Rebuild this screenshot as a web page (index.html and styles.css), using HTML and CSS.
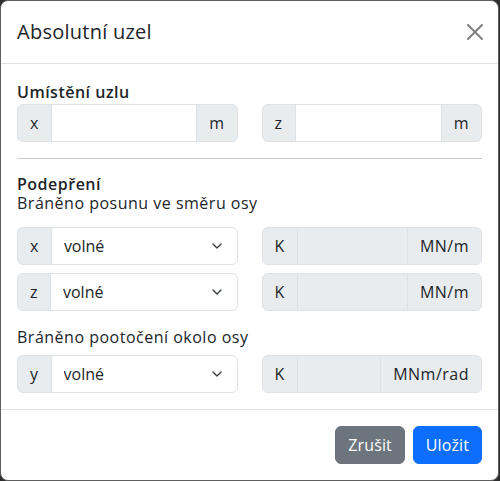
FILE: index.html
```html
<!DOCTYPE html>
<html lang="cs">
<head>
<meta charset="utf-8">
<title>Absolutní uzel</title>
<link rel="stylesheet" href="styles.css">
</head>
<body>
<div class="modal">
  <div class="modal-header">
    <h5 class="modal-title">Absolutní uzel</h5>
    <button class="btn-close" type="button" aria-label="Close">
      <svg viewBox="0 0 16 16" width="16" height="16"><path d="M.293.293a1 1 0 0 1 1.414 0L8 6.586 14.293.293a1 1 0 1 1 1.414 1.414L9.414 8l6.293 6.293a1 1 0 0 1-1.414 1.414L8 9.414l-6.293 6.293a1 1 0 0 1-1.414-1.414L6.586 8 .293 1.707a1 1 0 0 1 0-1.414z"/></svg>
    </button>
  </div>
  <div class="modal-body">
    <div class="label-bold">Umístění uzlu</div>
    <div class="grid-row">
      <div class="input-group">
        <span class="addon">x</span>
        <input class="form-control" type="text">
        <span class="addon">m</span>
      </div>
      <div class="input-group">
        <span class="addon">z</span>
        <input class="form-control" type="text">
        <span class="addon">m</span>
      </div>
    </div>
    <hr class="divider">
    <div class="support-head">
      <div class="label-bold">Podepření</div>
      <div>Bráněno posunu ve směru osy</div>
    </div>
    <div class="grid-row first-row">
      <div class="input-group">
        <span class="addon">x</span>
        <div class="select-wrap">
          <select class="form-select"><option>volné</option></select>
          <svg class="chevron" viewBox="0 0 10 6" width="10" height="6"><path d="M1 1l4 4 4-4" fill="none" stroke="#343a40" stroke-width="1.3" stroke-linecap="round" stroke-linejoin="round"/></svg>
        </div>
      </div>
      <div class="input-group">
        <span class="addon">K</span>
        <input class="form-control" type="text" disabled>
        <span class="addon">MN/m</span>
      </div>
    </div>
    <div class="grid-row next-row">
      <div class="input-group">
        <span class="addon">z</span>
        <div class="select-wrap">
          <select class="form-select"><option>volné</option></select>
          <svg class="chevron" viewBox="0 0 10 6" width="10" height="6"><path d="M1 1l4 4 4-4" fill="none" stroke="#343a40" stroke-width="1.3" stroke-linecap="round" stroke-linejoin="round"/></svg>
        </div>
      </div>
      <div class="input-group">
        <span class="addon">K</span>
        <input class="form-control" type="text" disabled>
        <span class="addon">MN/m</span>
      </div>
    </div>
    <div class="sub-label">Bráněno pootočení okolo osy</div>
    <div class="grid-row">
      <div class="input-group">
        <span class="addon">y</span>
        <div class="select-wrap">
          <select class="form-select"><option>volné</option></select>
          <svg class="chevron" viewBox="0 0 10 6" width="10" height="6"><path d="M1 1l4 4 4-4" fill="none" stroke="#343a40" stroke-width="1.3" stroke-linecap="round" stroke-linejoin="round"/></svg>
        </div>
      </div>
      <div class="input-group">
        <span class="addon">K</span>
        <input class="form-control" type="text" disabled>
        <span class="addon">MNm/rad</span>
      </div>
    </div>
  </div>
  <div class="modal-footer">
    <button class="btn btn-secondary" type="button">Zrušit</button>
    <button class="btn btn-primary" type="button">Uložit</button>
  </div>
</div>
</body>
</html>
```
FILE: styles.css
```css
* { box-sizing: border-box; }

body {
  margin: 0;
  background: #2e2e2e;
  font-family: "Open Sans", "DejaVu Sans", sans-serif;
  font-size: 16px;
  line-height: 24px;
  letter-spacing: 0.5px;
  color: #212529;
}

.modal {
  width: 499px;
  height: 481px;
  background: #fff;
  border: 1px solid #5e5e5e;
  border-radius: 8px;
  display: flex;
  flex-direction: column;
}

.modal-header {
  display: flex;
  align-items: center;
  padding: 16px;
  border-bottom: 1px solid #dee2e6;
}

.modal-title {
  margin: 0;
  font-size: 20px;
  line-height: 30px;
  font-weight: 400;
  letter-spacing: 0.25px;
}

.btn-close {
  margin: 0 -1px 0 auto;
  padding: 0;
  width: 16px;
  height: 16px;
  border: 0;
  background: none;
  opacity: 0.5;
  display: flex;
}

.btn-close svg { fill: #000; }

.modal-body {
  padding: 16px;
  flex: 1;
}

.label-bold {
  font-weight: 600;
}

.grid-row {
  display: grid;
  grid-template-columns: minmax(0, 1fr) minmax(0, 1fr);
  column-gap: 24px;
}

.first-row { margin-top: 14px; }
.next-row { margin-top: 8px; }

.input-group {
  display: flex;
  align-items: stretch;
  height: 38px;
  min-width: 0;
}

.addon {
  display: flex;
  align-items: center;
  padding: 0 12px;
  background: #e9ecef;
  border: 1px solid #dee2e6;
  white-space: nowrap;
  flex: none;
}

.input-group > * + * { margin-left: -1px; }

.input-group > :first-child {
  border-radius: 6px 0 0 6px;
}

.input-group > :last-child {
  border-radius: 0 6px 6px 0;
}

.form-control {
  flex: 1 1 0;
  width: 0;
  min-width: 0;
  border: 1px solid #dee2e6;
  background: #fff;
  font: inherit;
  padding: 6px 12px;
  outline: none;
}

.form-control:disabled {
  background: #e9ecef;
}

.select-wrap {
  flex: 1 1 0;
  width: 0;
  min-width: 0;
  position: relative;
  display: flex;
}

.form-select {
  appearance: none;
  -webkit-appearance: none;
  flex: 1;
  width: 100%;
  min-width: 0;
  border: 1px solid #dee2e6;
  border-radius: 0 6px 6px 0;
  background: #fff;
  font: inherit;
  color: #212529;
  padding: 6px 36px 6px 12px;
  outline: none;
}

.chevron {
  position: absolute;
  right: 16px;
  top: 16px;
}

.divider {
  margin: 16px 0;
  border: 0;
  border-top: 1px solid #c8c9ca;
  height: 0;
}

.support-head {
  margin-top: 1px;
  line-height: 19px;
}

.sub-label {
  margin-top: 14px;
  margin-bottom: 6px;
}

.modal-footer {
  display: flex;
  justify-content: flex-end;
  gap: 8px;
  padding: 16px;
  border-top: 1px solid #dee2e6;
}

.btn {
  font: inherit;
  line-height: 24px;
  padding: 6px 12px;
  border: 1px solid transparent;
  border-radius: 6px;
  color: #fff;
  letter-spacing: 0.1px;
}

.btn-secondary { background: #6c757d; border-color: #6c757d; }
.btn-primary { background: #0d6efd; border-color: #0d6efd; }
```
